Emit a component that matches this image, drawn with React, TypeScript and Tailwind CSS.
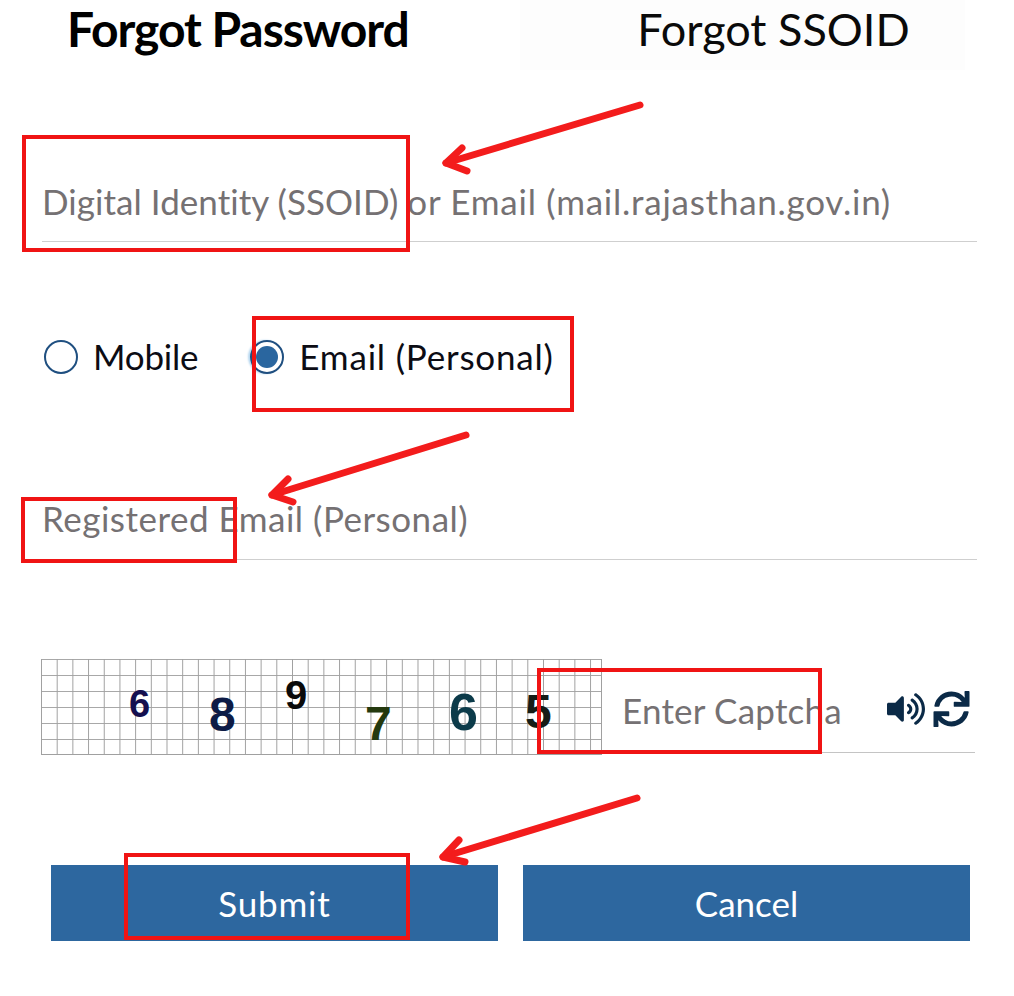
// Forgot password form with the red annotation marks drawn over it
import React from 'react';
import { FaVolumeUp, FaSync } from 'react-icons/fa';

const digits = [
  { ch: '6', cls: 'left-[88px] top-[26px] text-[38px] text-[#14104f]' },
  { ch: '8', cls: 'left-[168px] top-[32px] text-[48px] text-[#0d1b45]' },
  { ch: '9', cls: 'left-[244px] top-[16px] text-[40px] text-[#0a0a0a]' },
  { ch: '7', cls: 'left-[324px] top-[41px] text-[48px] text-[#24390e]' },
  { ch: '6', cls: 'left-[408px] top-[27px] text-[52px] text-[#0c3b4a]' },
  { ch: '5', cls: 'left-[484px] top-[29px] text-[48px] text-[#161c16]' },
];

const boxes = [
  'left-[22px] top-[135px] w-[388px] h-[117px]',
  'left-[252px] top-[316px] w-[322px] h-[96px]',
  'left-[21px] top-[497px] w-[216px] h-[66px]',
  'left-[537px] top-[668px] w-[285px] h-[86px]',
  'left-[124px] top-[853px] w-[286px] h-[87px]',
];

function Arrow({ tail, tip, a, b }: { tail: string; tip: string; a: string; b: string }) {
  return (
    <g>
      <path d={`M${tail} L${tip}`} />
      <path d={`M${a} L${tip} L${b}`} />
    </g>
  );
}

function Field({ children, className }: { children: React.ReactNode; className: string }) {
  return (
    <div className={`border-b border-[#cfcfcf] text-[35px] leading-[44px] text-[#757173] ${className}`}>
      {children}
    </div>
  );
}

function Radio({ checked, label, className }: { checked?: boolean; label: string; className: string }) {
  return (
    <label className="flex items-center gap-[15px]">
      <span className={`mt-[2px] flex h-[34px] w-[34px] items-center justify-center rounded-full border-2 border-[#1f4f80] ${checked ? 'shadow-[-2px_0_2px_#b8d8f0]' : ''}`}>
        {checked && <span className="h-[22px] w-[22px] rounded-full bg-[#2a669f]" />}
      </span>
      <span className={`text-[35px] leading-[44px] text-[#0c0c14] ${className}`}>{label}</span>
    </label>
  );
}

export default function App() {
  return (
    <div className="relative h-[996px] w-[1014px] overflow-hidden bg-white font-['Lato','Noto_Sans',sans-serif]">
      <div className="flex h-[70px] pl-[67px] pr-[49px]">
        <div className="w-[453px] text-[48px] font-bold leading-[58px] tracking-[-1.05px] text-black">Forgot Password</div>
        <div className="flex flex-1 justify-center bg-[#fdfdfd] pl-[62px] text-[45px] leading-[58px] text-[#0a0a0a]">Forgot SSOID</div>
      </div>

      <div className="pl-[42px] pr-[37px] pt-[109px]">
        <Field className="h-[63px]">
          <span className="tracking-[0.05px]">Digital Identity (SSOID)</span>{' '}
          <span className="tracking-[0.75px]">or Email (mail.rajasthan.gov.in)</span>
        </Field>
      </div>

      <div className="flex gap-[52px] pl-[44px] pt-[92px]">
        <Radio label="Mobile" className="tracking-[-0.2px]" />
        <Radio checked label="Email (Personal)" className="tracking-[0.8px]" />
      </div>

      <div className="pl-[42px] pr-[37px] pt-[115px]">
        <Field className="h-[67px] pt-[3px] tracking-[0.5px]">Registered Email (Personal)</Field>
      </div>

      <div className="ml-[41px] mr-[39px] mt-[99px] flex h-[96px] items-stretch">
        <div className="relative w-[561px] shrink-0 border-b border-r border-[#a0a0a0] bg-[linear-gradient(to_right,#a0a0a0_1px,transparent_1px),linear-gradient(to_bottom,#a8a8a8_1px,transparent_1px)] bg-[size:15.7px_16px] font-['Liberation_Sans',sans-serif] font-bold">
          {digits.map((d, i) => (
            <span key={i} className={`absolute leading-none ${d.cls}`}>{d.ch}</span>
          ))}
        </div>
        <div className="mb-[2px] flex flex-1 items-center border-b border-[#c4c4c4] pl-[20px] pr-[5px] pt-[9px]">
          <span className="flex-1 text-[35px] leading-[44px] tracking-[0.2px] text-[#757173]">Enter Captcha</span>
          <FaVolumeUp className="-mt-[3px] h-[34px] w-[38px] text-[#0b2a47]" />
          <FaSync className="-mt-[3px] ml-[8px] h-[36px] w-[37px] text-[#0b2a47]" />
        </div>
      </div>

      <div className="flex gap-[25px] pl-[51px] pt-[110px]">
        <button className="h-[76px] w-[447px] bg-[#2d679f] text-[35px] tracking-[0.8px] text-white">Submit</button>
        <button className="h-[76px] w-[447px] bg-[#2d679f] text-[35px] text-white">Cancel</button>
      </div>

      {boxes.map((b) => (
        <div key={b} className={`pointer-events-none absolute border-[4px] border-[#f01414] ${b}`} />
      ))}

      <svg className="pointer-events-none absolute left-0 top-0" width="1014" height="996" fill="none" stroke="#f31c1c" strokeWidth="7" strokeLinecap="round" strokeLinejoin="round">
        <Arrow tail="640,105" tip="446,163" a="462,148" b="467,171" />
        <Arrow tail="466,435" tip="272,495" a="288,479" b="293,502" />
        <Arrow tail="637,798" tip="443,857" a="459,840" b="465,862" />
      </svg>
    </div>
  );
}
